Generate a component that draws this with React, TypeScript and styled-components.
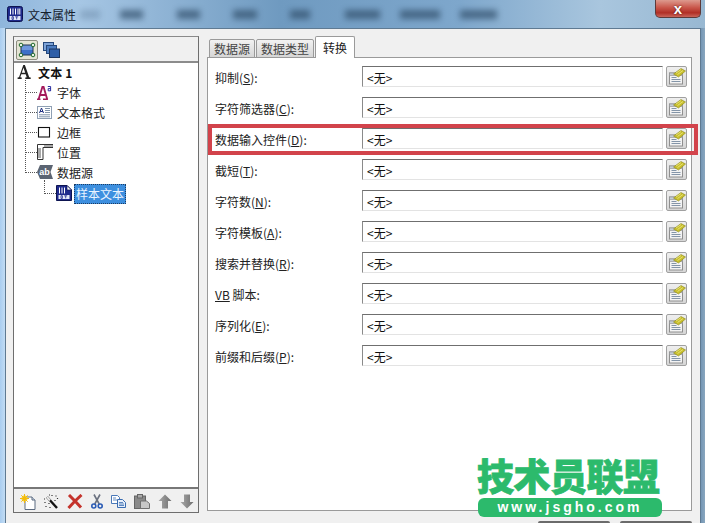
import React from "react";
import styled, { createGlobalStyle } from "styled-components";

const Global = createGlobalStyle`
  html, body { margin: 0; padding: 0; width: 705px; height: 523px; overflow: hidden; background: #f0f0f0; }
  * { box-sizing: border-box; }
  body { font-family: "Noto Sans CJK SC", "Noto Sans", sans-serif; font-size: 12px; color: #1c1c1c; }
`;

const Screen = styled.div`
  position: relative; width: 705px; height: 523px; overflow: hidden;
  display: flex; flex-direction: column;
  background: linear-gradient(90deg, #a9cdf0 0, #c2dcf4 5px, #6f92b2 700px, #8aa7bf 705px);
`;
const TitleBar = styled.div`
  height: 28px; flex: none; display: flex; align-items: flex-start; padding: 6px 4px 0 7px;
  background: linear-gradient(90deg, #8fb6dc 0, #a6c6e4 80px, #6f9ac0 280px, #7ea7cc 460px, #a9c6de 600px, #98b8d2 705px);
`;
const TitleText = styled.div`
  margin-left: 5px; font-size: 12px; line-height: 17px; width: 50px; color: #14202c; white-space: nowrap; flex: none;
`;
const MenuGhosts = styled.div`
  display: flex; margin-top: 4px; flex: 1; filter: blur(3px); opacity: .68;
`;
const Ghost = styled.span<{ $w: number; $gap: number; $faint?: boolean }>`
  display: block; height: 9px; flex: none; width: ${(p) => p.$w}px; margin-left: ${(p) => p.$gap}px;
  background: #2d4a66; opacity: ${(p) => (p.$faint ? 0.35 : 1)};
`;
const CloseBtn = styled.div`
  width: 46px; height: 18px; margin-top: -6px; flex: none;
  border: 1px solid #5d3a3a; border-top: none; border-radius: 0 0 5px 5px;
  background: linear-gradient(180deg, #dd9a8e 0, #c9564a 45%, #b12f26 75%, #c9655a 100%);
  display: flex; align-items: center; justify-content: center;
  color: #fff; font: bold 15px/15px "Liberation Sans", sans-serif;
  text-shadow: 0 0 2px #4a1410;
`;
const Body = styled.div`
  flex: 1; margin: 0 4px 0 5px; background: #f0f0f0; border: 1px solid #5f7a92; border-bottom: none;
  display: flex; padding: 7px 8px 0 7px; gap: 8px;
`;
const LeftPanel = styled.div`
  width: 186px; height: 477px; flex: none; display: flex; flex-direction: column; border: 1px solid #6e6e6e; border-top-color: #8a8a8a;
`;
const TopTools = styled.div`
  height: 26px; flex: none; display: flex; align-items: center; gap: 2px; padding: 1px 0 0 2px;
  background: #f0f0f0; border-bottom: 2px solid #8c8c8c;
`;
const ToolToggle = styled.div<{ $on?: boolean }>`
  width: 22px; height: 20px; display: flex; align-items: center; justify-content: center; border-radius: 2px;
  border: 1px solid ${(p) => (p.$on ? "#8d8d80" : "transparent")};
  background: ${(p) => (p.$on ? "#e4e4d4" : "transparent")};
`;
const Tree = styled.div`
  flex: 1; background: #fff; padding: 0 0 0 3px; display: flex; flex-direction: column;
`;
const RootRow = styled.div`
  height: 20px; padding-bottom: 2px; display: flex; align-items: center; gap: 6px; font-weight: 700; font-size: 12px; letter-spacing: .2px; color: #111;
`;
const TreeRow = styled.div<{ $indent: number; $tall: number; $gap: number; $drop?: number }>`
  position: relative; height: 20px; display: flex; align-items: center; gap: ${(p) => p.$gap}px;
  margin-top: ${(p) => p.$drop ?? 0}px;
  margin-left: ${(p) => p.$indent}px; padding: 0 0 2px 12px; color: #222;
  &::before {
    content: ""; position: absolute; left: 0; bottom: 10px; width: 11px; height: ${(p) => p.$tall}px;
    border-left: 1px dotted #555; border-bottom: 1px dotted #555;
  }
`;
const Selected = styled.span`
  background: #3d8fdf; color: #eaf4ff; height: 20px; line-height: 20px; padding: 0 2px; margin-top: 2px;
  outline: 1px dotted #1b3c64; outline-offset: -1px; width: 52px; white-space: nowrap;
`;
const BottomTools = styled.div`
  height: 25px; flex: none; display: flex; align-items: center; gap: 8px; padding: 2px 0 0 6px;
  background: #f0f0f0; border-top: 2px solid #777;
`;
const Right = styled.div`
  width: 485px; flex: none; display: flex; flex-direction: column; padding-top: 1px;
`;
const Tabs = styled.div`
  display: flex; height: 21px; padding-left: 2px; flex: none; align-items: flex-end; position: relative; z-index: 1; margin-bottom: -1px;
`;
const Tab = styled.div<{ $active?: boolean }>`
  height: ${(p) => (p.$active ? 22 : 19)}px; padding: 0 ${(p) => (p.$active ? 7 : 4)}px; margin-right: ${(p) => (p.$active ? 0 : 1)}px;
  line-height: ${(p) => (p.$active ? 21 : 18)}px; font-size: 12px; white-space: nowrap;
  border: 1px solid #9a9a9a; border-radius: 2px 2px 0 0;
  border-bottom: ${(p) => (p.$active ? "none" : "1px solid #9a9a9a")};
  background: ${(p) => (p.$active ? "#fff" : "linear-gradient(180deg,#f2f2f2,#d6d6d6)")};
  color: ${(p) => (p.$active ? "#1c1c1c" : "#444")};
`;
const TabPage = styled.div`
  height: 454px; flex: none; background: #fff; border: 1px solid #9a9a9a; padding: 8px 0 0 7px; display: flex; flex-direction: column;
`;
const Row = styled.div`
  position: relative; height: 31px; flex: none; display: flex; align-items: flex-start;
`;
const Label = styled.div`
  width: 147px; flex: none; font-size: 12px; line-height: 23px; white-space: nowrap; color: #222;
  u { text-underline-offset: 1px; }
`;
const Field = styled.div`
  width: 301px; height: 21px; flex: none; background: #fff; padding-left: 4px; line-height: 21px; font-size: 12px; color: #111;
  border: 1px solid #e3e3e3; border-top: 1px solid #6f6f6f; border-left: 1px solid #8a8a8a;
`;
const PickBtn = styled.div`
  width: 21px; height: 21px; margin-left: 3px; flex: none; border: 1px solid #a0a0a0; border-radius: 2px;
  background: linear-gradient(180deg, #efefef, #d6d6d6); display: flex; align-items: center; justify-content: center;
`;
const Highlight = styled.div`
  position: absolute; left: -7px; top: -4px; width: 490px; height: 31px; border: 4px solid #d2434b; pointer-events: none;
`;
const Peek = styled.div`
  position: absolute; bottom: 0; height: 2px; width: 72px; background: #6b6b6b; border-radius: 2px 2px 0 0;
`;
const PeekLeft = styled(Peek)` left: 538px; `;
const PeekRight = styled(Peek)` left: 620px; `;
const Watermark = styled.div`
  position: absolute; left: 477px; top: 455px; width: 186px; display: flex; flex-direction: column; align-items: stretch;
`;
const MarkTitle = styled.div`
  font: 900 37px/40px "Noto Sans CJK SC", sans-serif; letter-spacing: -0.5px; color: #2cba6c; white-space: nowrap;
  height: 40px; -webkit-text-stroke: 0.8px #2cba6c;
`;
const MarkPill = styled.div`
  height: 19px; margin: 3px 0 0 1px; width: 184px; border-radius: 6px; background: #2cba6c; color: #fff; text-align: center;
  font: 700 14px/18px "Liberation Sans", sans-serif; letter-spacing: 3px; white-space: nowrap;
`;

const AppIcon = ({ s = 16, ear }: { s?: number; ear?: boolean }) => (
  <svg width={s} height={s} viewBox="0 0 16 16" style={{ flex: "none" }}>
    <path
      d={ear ? "M.5.5H11L15.500 5v10.500H.5z" : "M2.500.5h11a2 2 0 0 1 2 2v11a2 2 0 0 1-2 2h-11a2 2 0 0 1-2-2v-11a2 2 0 0 1 2-2z"}
      fill="#1f2a8c"
      stroke="#0d1450"
    />
    {ear && <path d="M11 .5V5h4.500z" fill="#fff" stroke="#0d1450" strokeWidth=".7" />}
    <path d="M3.500 2.500v6M6 2.500v6M8.500 2.500v6" stroke="#fff" strokeWidth="1" />
    {!ear && <path d="M11 2.500v6M12.800 2.500v6" stroke="#fff" strokeWidth="1" />}
    <rect x="2.500" y="10" width="11" height="4" fill="#e4e8f8" />
    <path d="M5 10.700v2.700h1.400v-2.700zM8.200 10.800h3M9.700 10.800v2.600" stroke="#1f2a8c" strokeWidth=".8" fill="none" />
  </svg>
);
const LetterA = () => (
  <svg width="15" height="14" viewBox="0 0 15 14" style={{ flex: "none" }}>
    <path
      d="M6.300 0h1.600l4.300 12.200 1.500.4V14H8.300v-1.400l1.400-.3-1-3.100H4.300l-1 3.100 1.400.3V14H.6v-1.400l1.400-.4zM4.800 7.800h3.400L6.500 2.800z"
      fill="#222"
      fillRule="evenodd"
    />
  </svg>
);
const FontIcon = () => (
  <svg width="15" height="15" viewBox="0 0 15 15" style={{ flex: "none" }}>
    <path d="M0 14.500h3.500M6 14.500h5M1.500 14.500L5.400 2h1.200l3.700 12.500M3 10h5.500" stroke="#a3195b" strokeWidth="1.800" fill="none" />
    <path d="M10.800 1.500h2.800v4.500M13.600 3.600h-2.400v2.200h2.400" stroke="#2b2fa0" strokeWidth="1" fill="none" />
  </svg>
);
const FormatIcon = () => (
  <svg width="15" height="13" viewBox="0 0 15 13" style={{ flex: "none" }}>
    <rect x=".5" y=".5" width="14" height="12" fill="#fff" stroke="#8fa0b4" />
    <path d="M2.500 7L4.500 2 6.500 7M3.200 5.500h2.600" stroke="#1c2d80" strokeWidth="1" fill="none" />
    <path d="M8 2.500h5M8 4.500h5M8 6.500h5M2 8.800h11M2 10.800h11" stroke="#7f93aa" strokeWidth="1" />
  </svg>
);
const BorderIcon = () => (
  <svg width="15" height="13" viewBox="0 0 15 13" style={{ flex: "none" }}>
    <rect x="1.500" y="1.500" width="11" height="9.500" fill="#fff" stroke="#111" strokeWidth="1.100" />
  </svg>
);
const RulerIcon = () => (
  <svg width="16" height="16" viewBox="0 0 16 16" style={{ flex: "none" }}>
    <path d="M.5.500h15.500v3H6v12H.5z" fill="#fff" stroke="#333" strokeWidth="1" />
    <path d="M8 1v2M10 1v2M12 1v2M14 1v2M1 5h3M1 7h3M1 9h3M1 11h3M1 13h3" stroke="#555" strokeWidth="1" />
  </svg>
);
const SourceIcon = () => (
  <svg width="16" height="14" viewBox="0 0 16 14" style={{ flex: "none" }}>
    <path d="M3 0h13l-2.500 7L16 14H3L0 7z" fill="#5b6472" />
    <text x="2.200" y="10" fontFamily="Liberation Sans, sans-serif" fontSize="9" fontWeight="700" fill="#fff">ab</text>
  </svg>
);
const SelectIcon = () => (
  <svg width="18" height="16" viewBox="0 0 18 16">
    <rect x="3" y="3" width="12" height="10" fill="#3d70c8" />
    <path d="M3 3h12v5H3z" fill="#6e97dc" />
    <rect x="3" y="3" width="12" height="10" fill="none" stroke="#22344f" />
    <g fill="#e8f0e8" stroke="#1f6a2c" strokeWidth="1"><circle cx="3" cy="3" r="1.800" /><circle cx="15" cy="3" r="1.800" /><circle cx="3" cy="13" r="1.800" /><circle cx="15" cy="13" r="1.800" /></g>
  </svg>
);
const LayersIcon = () => (
  <svg width="17" height="16" viewBox="0 0 17 16">
    <rect x=".5" y=".5" width="10" height="8" fill="#7da3d8" stroke="#25487c" />
    <rect x="3.500" y="3.500" width="10" height="8" fill="#4c7cc0" stroke="#25487c" />
    <rect x="6.500" y="7" width="10" height="8.500" fill="#2f5fa8" stroke="#1c3660" />
  </svg>
);
const NewIcon = () => (
  <svg width="16" height="16" viewBox="0 0 16 16" style={{ flex: "none" }}>
    <path d="M5 3h7l3 3v9.500H5z" fill="#fff" stroke="#5b6a80" />
    <path d="M12 3v3h3" fill="#d6deea" stroke="#5b6a80" />
    <circle cx="4.500" cy="4.500" r="3" fill="#f6d22c" />
    <path d="M4.500 0v9M0 4.500h9M1.300 1.300l6.400 6.400M7.700 1.300L1.300 7.700" stroke="#f3b90d" strokeWidth="1" />
  </svg>
);
const WandIcon = () => (
  <svg width="15" height="16" viewBox="0 0 15 16" style={{ flex: "none" }}>
    <path d="M3 3l10 11" stroke="#111" strokeWidth="2.400" />
    <path d="M3 3l3 3.300" stroke="#eee" strokeWidth="2" />
    <path d="M8 1v1M12 1.500v1M11 6v1M13.500 4v1M1 8v1M5 9v1M2 12v1M6 13v1M0 5h1M5 1h1" stroke="#333" strokeWidth="1.200" />
  </svg>
);
const CrossIcon = () => (
  <svg width="16" height="15" viewBox="0 0 16 15" style={{ flex: "none" }}>
    <path d="M2 1c3 3 7 7 12 12.500M14.500 1C10 5 6 9 1.500 14" stroke="#c4332c" strokeWidth="3" fill="none" />
  </svg>
);
const CutIcon = () => (
  <svg width="12" height="15" viewBox="0 0 12 15" style={{ flex: "none" }}>
    <path d="M3 0.500l5.200 9.500M9 0.500L3.800 10" stroke="#6b7280" strokeWidth="1.600" />
    <circle cx="2.800" cy="12" r="2" fill="none" stroke="#2a5bb5" strokeWidth="1.600" />
    <circle cx="9.200" cy="12" r="2" fill="none" stroke="#2a5bb5" strokeWidth="1.600" />
  </svg>
);
const CopyIcon = () => (
  <svg width="15" height="13" viewBox="0 0 15 13" style={{ flex: "none" }}>
    <path d="M.5.500h6l2 2v6H.5z" fill="#fff" stroke="#4a78b8" />
    <path d="M6.500 4.500h5l3 3v5h-8z" fill="#e8f0fb" stroke="#3a6cb0" />
    <path d="M8 7.500h4M8 9h5M8 10.500h5M2 3h3M2 5h4" stroke="#3a6cb0" strokeWidth=".8" />
  </svg>
);
const PasteIcon = () => (
  <svg width="16" height="15" viewBox="0 0 16 15" style={{ flex: "none" }}>
    <rect x=".5" y="2" width="11" height="12.500" fill="#8a8a8a" stroke="#666" />
    <rect x="3.500" y=".5" width="5" height="3.500" fill="#aaa" stroke="#666" />
    <path d="M6.500 7h6l3 2.500v5h-9z" fill="#c8c8c8" stroke="#707070" />
  </svg>
);
const ArrowIcon = ({ down }: { down?: boolean }) => (
  <svg width="14" height="15" viewBox="0 0 14 15" style={{ flex: "none", transform: down ? "scaleY(-1)" : undefined }}>
    <defs>
      <linearGradient id="arrowFill" x1="0" x2="1" y1="0" y2="0"><stop offset="0" stopColor="#a8a8a8" /><stop offset="1" stopColor="#6f6f6f" /></linearGradient>
    </defs>
    <path d="M7 .5L13.500 7H10v7.500H4V7H.5z" fill="url(#arrowFill)" />
  </svg>
);
const PickIcon = () => (
  <svg width="18" height="17" viewBox="0 0 18 17">
    <rect x="1.500" y="5" width="13" height="11" fill="#f3f3f3" stroke="#8f8f8f" />
    <rect x="1.500" y="5" width="13" height="2.500" fill="#c3ccd6" stroke="#8f8f8f" strokeWidth=".6" />
    <path d="M3.500 9.500h5M3.500 11.500h9M3.500 13.500h9" stroke="#8495a8" strokeWidth="1" />
    <path d="M5.500 6L13 .5l4.500 2.500L10.500 9z" fill="#c8bf2c" stroke="#8a861f" strokeWidth=".6" />
    <path d="M8 5l5-3.500M9.500 6.500L15 2.500" stroke="#eee88a" strokeWidth=".8" />
  </svg>
);

const rows: { label: string; key: string; suffix?: string }[] = [
  { label: "抑制", key: "S" },
  { label: "字符筛选器", key: "C" },
  { label: "数据输入控件", key: "D" },
  { label: "截短", key: "T" },
  { label: "字符数", key: "N" },
  { label: "字符模板", key: "A" },
  { label: "搜索并替换", key: "R" },
  { label: "", key: "VB", suffix: " 脚本:" },
  { label: "序列化", key: "E" },
  { label: "前缀和后缀", key: "P" },
];

const ghosts = [
  { w: 20, gap: 2, faint: true },
  { w: 23, gap: 20 },
  { w: 23, gap: 34 },
  { w: 24, gap: 33 },
  { w: 20, gap: 33 },
  { w: 35, gap: 35 },
  { w: 40, gap: 20 },
  { w: 37, gap: 20 },
];

export default function App() {
  return (
    <Screen>
      <Global />
      <TitleBar>
        <AppIcon />
        <TitleText>文本属性</TitleText>
        <MenuGhosts>
          {ghosts.map((g, i) => (
            <Ghost key={i} $w={g.w} $gap={g.gap} $faint={g.faint} />
          ))}
        </MenuGhosts>
        <CloseBtn>x</CloseBtn>
      </TitleBar>
      <Body>
        <LeftPanel>
          <TopTools>
            <ToolToggle $on><SelectIcon /></ToolToggle>
            <ToolToggle><LayersIcon /></ToolToggle>
          </TopTools>
          <Tree>
            <RootRow><LetterA /><span>文本 1</span></RootRow>
            <TreeRow $indent={8} $tall={12} $gap={5}><FontIcon /><span>字体</span></TreeRow>
            <TreeRow $indent={8} $tall={32} $gap={5}><FormatIcon /><span>文本格式</span></TreeRow>
            <TreeRow $indent={8} $tall={52} $gap={5}><BorderIcon /><span>边框</span></TreeRow>
            <TreeRow $indent={8} $tall={72} $gap={4}><RulerIcon /><span>位置</span></TreeRow>
            <TreeRow $indent={8} $tall={92} $gap={4}><SourceIcon /><span>数据源</span></TreeRow>
            <TreeRow $indent={27} $tall={13} $gap={2} $drop={1}><AppIcon ear /><Selected>样本文本</Selected></TreeRow>
          </Tree>
          <BottomTools>
            <NewIcon />
            <WandIcon />
            <CrossIcon />
            <CutIcon />
            <CopyIcon />
            <PasteIcon />
            <ArrowIcon />
            <ArrowIcon down />
          </BottomTools>
        </LeftPanel>
        <Right>
          <Tabs>
            <Tab>数据源</Tab>
            <Tab>数据类型</Tab>
            <Tab $active>转换</Tab>
          </Tabs>
          <TabPage>
            {rows.map((r) => (
              <Row key={r.key}>
                <Label>
                  {r.label}
                  {r.suffix ? null : "("}
                  <u>{r.key}</u>
                  {r.suffix ?? "):"}
                </Label>
                <Field>&lt;无&gt;</Field>
                <PickBtn><PickIcon /></PickBtn>
                {r.key === "D" && <Highlight />}
              </Row>
            ))}
          </TabPage>
        </Right>
      </Body>
      <PeekLeft />
      <PeekRight />
      <Watermark>
        <MarkTitle>技术员联盟</MarkTitle>
        <MarkPill>www.jsgho.com</MarkPill>
      </Watermark>
    </Screen>
  );
}
